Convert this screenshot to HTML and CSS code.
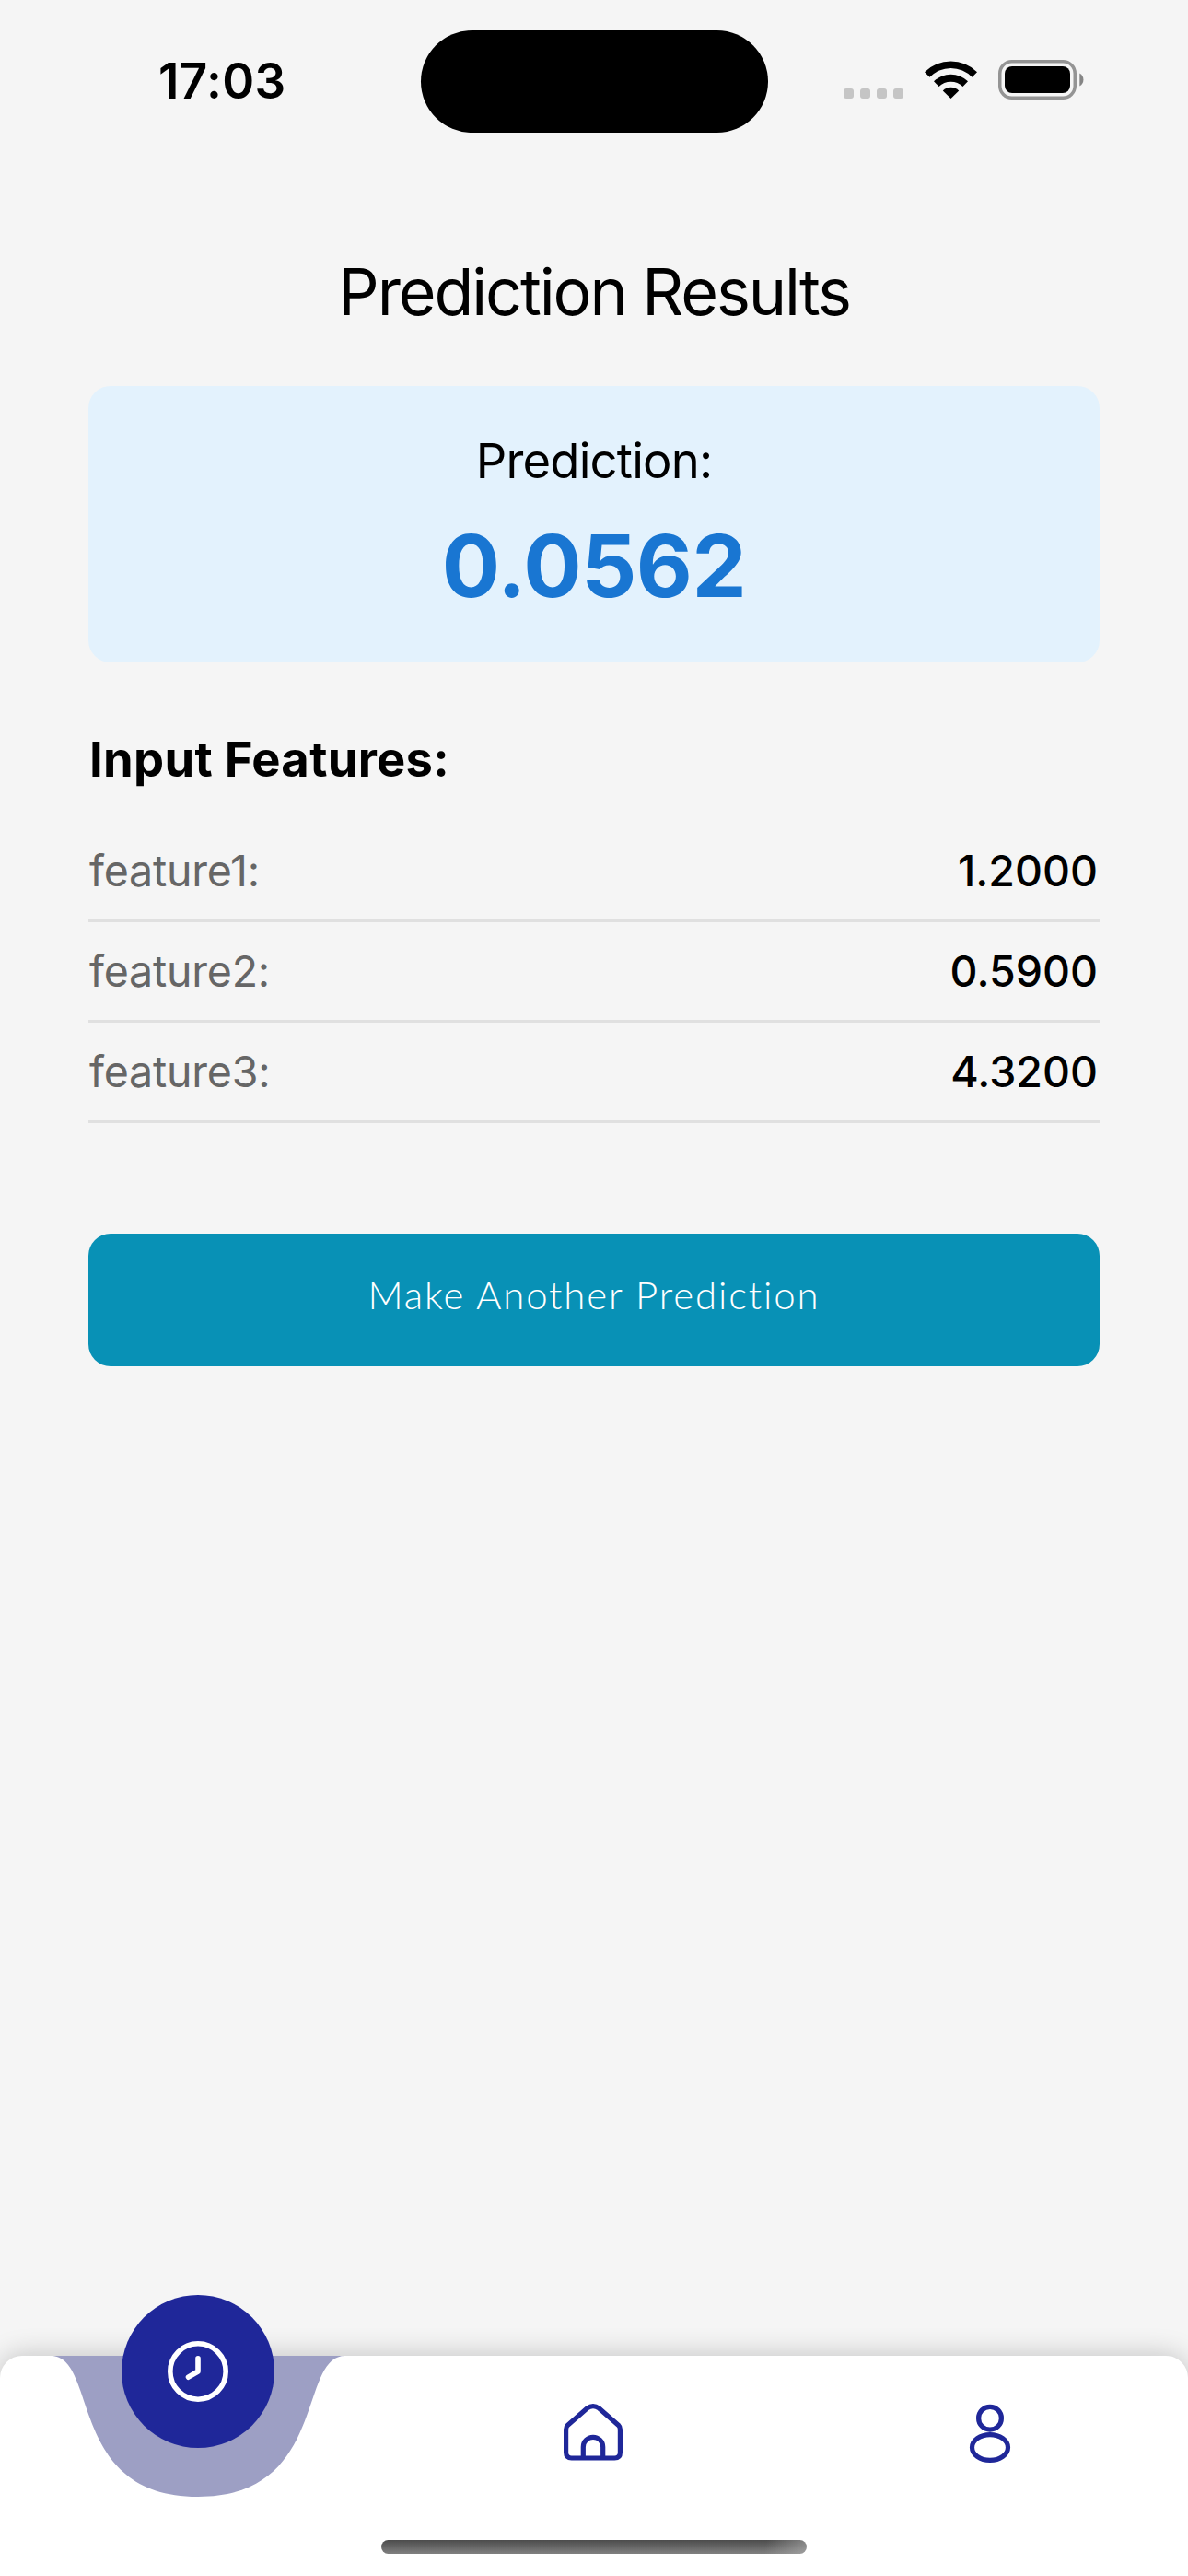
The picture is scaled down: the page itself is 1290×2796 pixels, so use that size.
FILE: index.html
```html
<!DOCTYPE html>
<html lang="en">
<head>
<meta charset="utf-8">
<title>Prediction Results</title>
<link rel="stylesheet" href="styles.css">
</head>
<body>
<div class="screen">
  <header class="status">
    <div class="time"><span>17:03</span></div>
    <div class="island"></div>
    <div class="indicators">
      <div class="cellular"><i></i><i></i><i></i><i></i></div>
      <svg class="wifi" width="58" height="43" viewBox="0 0 58 43">
        <path d="M0 13.200a40.500 40.500 0 0 1 57 0L51.500 18.700a32 32 0 0 0-46 0Z"/>
        <path d="M10 23.200a26.500 26.500 0 0 1 37 0L41.500 29a18.500 18.500 0 0 0-26 0Z"/>
        <path d="M19.800 33.400a12.400 12.400 0 0 1 17.400 0L28.500 42Z"/>
      </svg>
      <svg class="battery" width="95" height="43" viewBox="0 0 95 43">
        <rect x="1.750" y="1.750" width="81.500" height="39.500" rx="13" fill="none" stroke="#949494" stroke-width="3.500"/>
        <rect x="7" y="7" width="71" height="29" rx="8"/>
        <path d="M88.300 14.500a8 8 0 0 1 0 14Z" fill="#858585"/>
      </svg>
    </div>
  </header>

  <main class="content">
    <h1 class="title">Prediction Results</h1>
    <section class="card">
      <div class="card-label">Prediction:</div>
      <div class="card-value">0.0562</div>
    </section>
    <h2 class="subtitle">Input Features:</h2>
    <dl class="features">
      <div class="row"><dt>feature1:</dt><dd>1.2000</dd></div>
      <div class="row"><dt>feature2:</dt><dd>0.5900</dd></div>
      <div class="row"><dt>feature3:</dt><dd>4.3200</dd></div>
    </dl>
    <button class="again" type="button">Make Another Prediction</button>
  </main>

  <nav class="tabs">
    <svg class="notch" width="320" height="153" viewBox="55 0 320 153">
      <path d="M55 0C107 0 73 153 215 153S323 0 375 0Z"/>
    </svg>
    <a class="tab active">
      <span class="bubble">
        <svg width="72" height="72" viewBox="0 0 72 72"><circle cx="36" cy="36" r="30.200"/><path d="M36 21.800V36L25.500 42.200"/></svg>
      </span>
    </a>
    <a class="tab">
      <svg width="72" height="72" viewBox="0 0 72 72"><path d="M5.600 30q0-2.800 2-4.800L28.500 7q6.500-4.800 13 0L62.400 25.200q2 2 2 4.800V55q0 6-6 6H11.600q-6 0-6-6ZM24.300 61V49a10.700 10.700 0 0 1 21.400 0V61"/></svg>
    </a>
    <a class="tab">
      <svg width="72" height="72" viewBox="0 0 72 72"><circle cx="36" cy="17.700" r="12.400"/><ellipse cx="36" cy="49.500" rx="19.500" ry="13.900"/></svg>
    </a>
    <div class="home-bar"></div>
  </nav>
</div>
</body>
</html>
```
FILE: styles.css
```css
* { box-sizing: border-box; }
body { margin: 0; background: #f5f5f5; }
.screen {
  display: flex;
  flex-direction: column;
  width: 1290px;
  height: 2796px;
  overflow: hidden;
  background: #f5f5f5;
  color: #000;
  font-family: Inter, "Liberation Sans", sans-serif;
}

.status { display: grid; grid-template-columns: 457px 377px 456px; height: 275px; padding-top: 33px; }
.time { padding-left: 172px; font-size: 53px; font-weight: 600; line-height: 110px; letter-spacing: .4px; }
.island { height: 111px; border-radius: 56px; background: #000; }
.indicators { display: flex; align-items: flex-start; padding: 32px 0 0 82px; }
.cellular { display: flex; gap: 7px; padding-top: 31px; margin-right: 23px; }
.cellular i { width: 11px; height: 11px; border-radius: 3px; background: #c5c5c5; }
.wifi { margin-right: 22px; }

.content { flex: 1; padding: 0 96px; }
.title { margin: 0 0 60px; font-size: 70px; font-weight: 400; line-height: 84px; letter-spacing: -2.100px; text-align: center; }
.card { height: 300px; margin-bottom: 72px; padding: 48px; border-radius: 24px; background: #e3f2fd; text-align: center; }
.card-label { margin-bottom: 24px; font-size: 52.500px; line-height: 66px; letter-spacing: -.800px; }
.card-value { color: #1976d2; font-size: 94px; font-weight: 700; line-height: 114px; letter-spacing: -.400px; }
.subtitle { margin: 0 0 35px; padding-left: 1px; font-size: 52.500px; font-weight: 700; line-height: 66px; letter-spacing: .300px; }
.features { margin: 0 0 120px; }
.row { display: flex; justify-content: space-between; height: 109px; padding: 0 2px 0 1px; border-bottom: 3px solid #e0e0e0; font-size: 46.500px; line-height: 106px; }
.row dt { color: #666; letter-spacing: -.200px; }
.row dd { margin: 0; font-weight: 500; }
.again {
  display: block;
  width: 100%;
  height: 144px;
  padding: 36px 0 48px;
  border: 0;
  border-radius: 24px;
  background: #0891b6;
  color: #fff;
  font: 300 42px/60px Lato, sans-serif;
  letter-spacing: 1.850px;
  font-variant-ligatures: none;
  text-align: center;
}

.tabs {
  position: relative;
  display: grid;
  grid-template-columns: repeat(3, 1fr);
  height: 239px;
  border-radius: 24px 24px 0 0;
  background: #fff;
  box-shadow: 0 0 30px rgba(0, 0, 0, .22);
}
.notch { position: absolute; top: 0; left: 55px; fill: #9d9fc4; }
.tab { display: flex; justify-content: center; padding-top: 50px; }
.tab svg { fill: none; stroke: #1f2799; stroke-width: 5.200; stroke-linecap: round; stroke-linejoin: round; }
.active { padding-top: 0; }
.bubble { position: relative; display: grid; place-items: center; width: 166px; height: 166px; margin-top: -66px; border-radius: 50%; background: #1f2799; }
.tab .bubble svg { stroke: #fff; stroke-width: 5.600; }
.home-bar {
  position: absolute;
  left: 414px;
  top: 200px;
  width: 462px;
  height: 15px;
  border-radius: 8px;
  background: linear-gradient(100deg, transparent 90%, rgba(190, 190, 190, .5)), linear-gradient(#4c4c4c, #808080);
}
```
